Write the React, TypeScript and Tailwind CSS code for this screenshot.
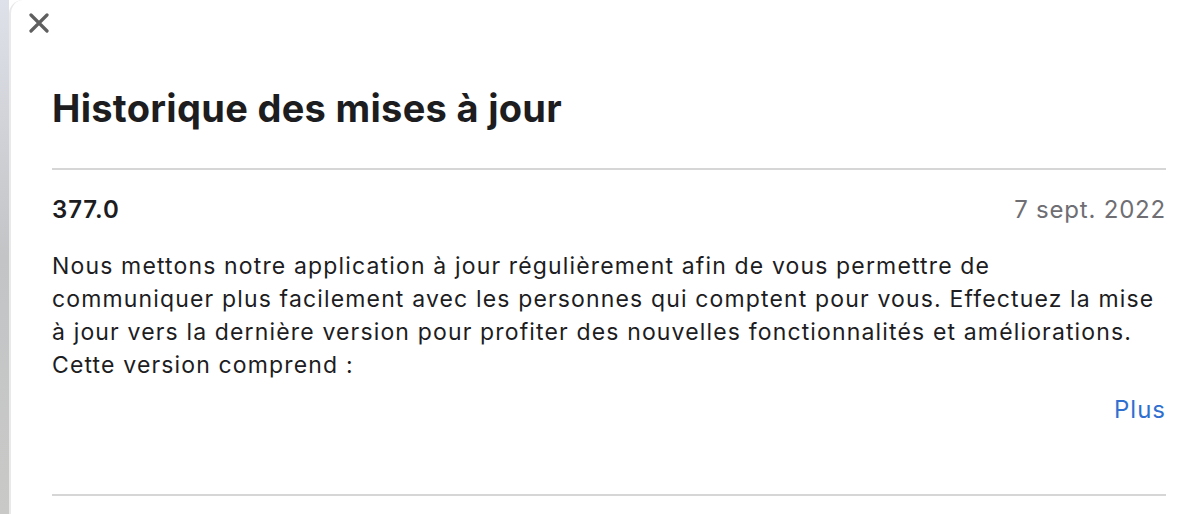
import React from 'react'

const font = { fontFamily: 'Inter, "Noto Sans", sans-serif' }

function CloseIcon() {
  return (
    <svg width="20" height="20" viewBox="0 0 20 20" className="block">
      <path d="M2 2 L18 18 M18 2 L2 18" stroke="#5f5f5f" strokeWidth="3.2" strokeLinecap="round" />
    </svg>
  )
}

export default function App() {
  const lines = [
    'Nous mettons notre application à jour régulièrement afin de vous permettre de',
    'communiquer plus facilement avec les personnes qui comptent pour vous. Effectuez la mise',
    'à jour vers la dernière version pour profiter des nouvelles fonctionnalités et améliorations.',
    'Cette version comprend :',
  ]

  return (
    <div className="flex h-[514px] w-[1204px] overflow-hidden bg-white" style={font}>
      <div className="w-[9px] shrink-0 bg-gradient-to-b from-[#dfe1ea] via-[#c2c4c6] to-[#c9c9c7]" />
      <div className="flex-1 rounded-tl-[14px] border-l-2 border-[#e9e9e9] bg-white">
        <div className="pl-[18px] pt-[13px]">
          <CloseIcon />
        </div>
        <div className="pl-[41px] pr-[38px]">
          <h1 className="mt-[52px] text-[38px] font-bold leading-[46px] text-[#1d1d1f] tracking-[0.3px]">
            Historique des mises à jour
          </h1>
          <div className="mt-[37px] h-[2px] bg-[#d6d6d6]" />
          <div className="mt-[22px] flex items-baseline justify-between leading-[36px]">
            <span className="text-[24px] font-semibold tracking-[0.9px] text-[#1d1d1f]">377.0</span>
            <span className="text-[24px] tracking-[0.8px] text-[#6e6e73]">7 sept. 2022</span>
          </div>
          <div className="mt-[22px] text-[23px] leading-[33px] tracking-[1.15px] text-[#1d1d1f]">
            {lines.map((l) => (
              <div key={l} className="whitespace-nowrap">
                {l}
              </div>
            ))}
          </div>
          <div className="mt-[11px] flex justify-end">
            <span className="text-[24px] leading-[33px] tracking-[1px] text-[#2f6fd0]">Plus</span>
          </div>
          <div className="mt-[68px] h-[2px] bg-[#d6d6d6]" />
        </div>
      </div>
    </div>
  )
}
